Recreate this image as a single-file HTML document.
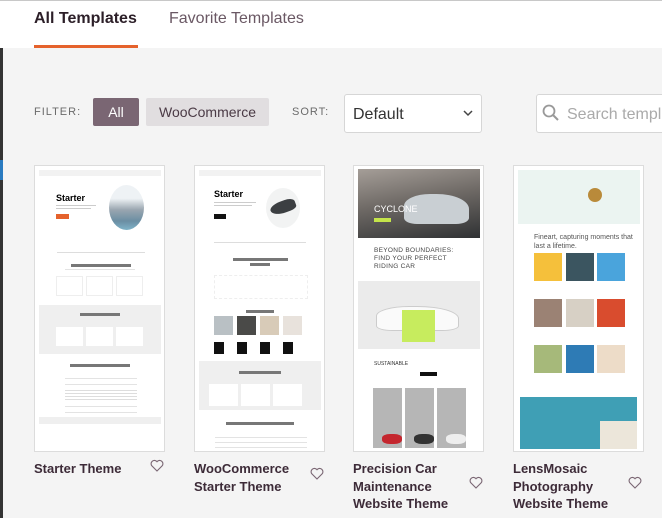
<!DOCTYPE html>
<html><head><meta charset="utf-8"><style>
*{margin:0;padding:0;box-sizing:border-box}
body{width:662px;height:518px;overflow:hidden;background:#f4f4f4;font-family:"Liberation Sans",sans-serif;position:relative}
.a{position:absolute}
.top{left:0;top:0;width:662px;height:48px;background:#fff;border-top:1px solid #c8c8c8}
.tab{font-size:16px;top:10px}
.card{background:#fff;border:1px solid #dcdcdc;width:131px;height:287px;top:165px;overflow:hidden}
.t{font-size:13px;font-weight:bold;color:#3d2b38;line-height:17.5px;top:460px}
.ln{background:#e3e3e3;height:1px}
.g{background:#efefef}
</style></head><body>
<div class="a top"></div>
<div class="a" style="left:0;top:48px;width:3px;height:470px;background:#333"></div>
<div class="a" style="left:0;top:160px;width:3px;height:20px;background:#2a7bc0"></div>
<div class="a tab" style="left:34px;font-weight:bold;color:#2c1f28;">All Templates</div>
<div class="a tab" style="left:169px;color:#6a5864;">Favorite Templates</div>
<div class="a" style="left:34px;top:45px;width:104px;height:3px;background:#e5622c"></div>

<div class="a" style="left:34px;top:106px;font-size:11px;letter-spacing:1px;color:#6b6b6b">FILTER:</div>
<div class="a" style="left:93px;top:98px;width:46px;height:28px;background:#7a6673;border-radius:2px;color:#fff;font-size:14px;text-align:center;line-height:28px">All</div>
<div class="a" style="left:146px;top:98px;width:123px;height:28px;background:#e1dee0;border-radius:2px;color:#4a3a45;font-size:14px;text-align:center;line-height:28px">WooCommerce</div>
<div class="a" style="left:292px;top:106px;font-size:11px;letter-spacing:1px;color:#6b6b6b">SORT:</div>
<div class="a" style="left:344px;top:94px;width:138px;height:39px;background:#fff;border:1px solid #d6d6d6;border-radius:3px;font-size:16px;color:#333;padding:11px 0 0 8px">Default</div>
<svg class="a" style="left:462px;top:108px" width="12" height="10"><path d="M2 3l4 4 4-4" stroke="#444" stroke-width="1.5" fill="none"/></svg>
<div class="a" style="left:536px;top:94px;width:140px;height:39px;background:#fff;border:1px solid #d6d6d6;border-radius:3px;font-size:16px;color:#aaa;padding:11px 0 0 30px;white-space:nowrap">Search templ</div>
<svg class="a" style="left:542px;top:104px" width="18" height="18"><circle cx="7" cy="7" r="5.5" stroke="#999" stroke-width="1.8" fill="none"/><path d="M11 11l5 5" stroke="#999" stroke-width="2"/></svg>

<!-- card 1 -->
<div class="a card" style="left:34px">
 <div class="a g" style="left:4px;top:4px;width:122px;height:6px;background:#f2f2f2"></div>
 <div class="a" style="left:21px;top:27px;font-size:9px;font-weight:bold">Starter</div>
 <div class="a ln" style="left:21px;top:39px;width:40px;background:#ccc"></div>
 <div class="a ln" style="left:21px;top:42px;width:35px;background:#ccc"></div>
 <div class="a" style="left:21px;top:48px;width:13px;height:5px;background:#e5622c"></div>
 <div class="a" style="left:74px;top:19px;width:35px;height:45px;border-radius:50%;background:linear-gradient(#eef2f5 30%,#9aa6b0 55%,#6b8ea3 80%,#7fb3c8)"></div>
 <div class="a ln" style="left:22px;top:86px;width:88px;background:#ddd"></div>
 <div class="a" style="left:36px;top:98px;width:60px;height:3px;background:#777"></div>
 <div class="a ln" style="left:30px;top:103px;width:70px"></div>
 <div class="a" style="left:21px;top:110px;width:27px;height:20px;border:1px solid #eee"></div>
 <div class="a" style="left:51px;top:110px;width:27px;height:20px;border:1px solid #eee"></div>
 <div class="a" style="left:81px;top:110px;width:27px;height:20px;border:1px solid #eee"></div>
 <div class="a g" style="left:4px;top:139px;width:122px;height:49px"></div>
 <div class="a" style="left:45px;top:147px;width:40px;height:3px;background:#777"></div>
 <div class="a" style="left:21px;top:161px;width:27px;height:19px;background:#fff"></div>
 <div class="a" style="left:51px;top:161px;width:27px;height:19px;background:#fff"></div>
 <div class="a" style="left:81px;top:161px;width:27px;height:19px;background:#fff"></div>
 <div class="a" style="left:35px;top:198px;width:60px;height:3px;background:#777"></div>
 <div class="a ln" style="left:30px;top:212px;width:72px"></div>
 <div class="a ln" style="left:30px;top:218px;width:72px"></div>
 <div class="a" style="left:30px;top:224px;width:72px;height:10px;background:repeating-linear-gradient(#ddd 0 1px,#fff 1px 3px)"></div>
 <div class="a ln" style="left:30px;top:240px;width:72px"></div>
 <div class="a ln" style="left:30px;top:246px;width:72px"></div>
 <div class="a g" style="left:4px;top:251px;width:122px;height:7px"></div>
</div>
<!-- card 2 -->
<div class="a card" style="left:194px">
 <div class="a g" style="left:4px;top:4px;width:122px;height:6px;background:#f2f2f2"></div>
 <div class="a" style="left:19px;top:23px;font-size:9px;font-weight:bold">Starter</div>
 <div class="a ln" style="left:19px;top:36px;width:42px;background:#ccc"></div>
 <div class="a ln" style="left:19px;top:39px;width:38px;background:#ccc"></div>
 <div class="a" style="left:19px;top:48px;width:12px;height:5px;background:#111"></div>
 <div class="a" style="left:71px;top:22px;width:34px;height:40px;border-radius:50%;background:#f2f3f3"></div>
 <div class="a" style="left:75px;top:35px;width:26px;height:12px;border-radius:50% 40% 30% 60%;background:#3c3f42;transform:rotate(-20deg)"></div>
 <div class="a ln" style="left:19px;top:76px;width:92px;background:#ddd"></div>
 <div class="a" style="left:38px;top:92px;width:55px;height:3px;background:#777"></div>
 <div class="a" style="left:55px;top:97px;width:20px;height:3px;background:#777"></div>
 <div class="a" style="left:19px;top:109px;width:94px;height:24px;border:1px dashed #eee"></div>
 <div class="a" style="left:51px;top:144px;width:28px;height:3px;background:#777"></div>
 <div class="a" style="left:19px;top:150px;width:19px;height:19px;background:#b9c0c4"></div>
 <div class="a" style="left:42px;top:150px;width:19px;height:19px;background:#4a4a48"></div>
 <div class="a" style="left:65px;top:150px;width:19px;height:19px;background:#d8cbb8"></div>
 <div class="a" style="left:88px;top:150px;width:19px;height:19px;background:#e8e2dc"></div>
 <div class="a" style="left:19px;top:176px;width:88px;height:12px;background:repeating-linear-gradient(90deg,#111 0 10px,#fff 10px 23px)"></div>
 <div class="a g" style="left:4px;top:195px;width:122px;height:49px"></div>
 <div class="a" style="left:44px;top:205px;width:42px;height:3px;background:#777"></div>
 <div class="a" style="left:14px;top:218px;width:29px;height:22px;background:#fff"></div>
 <div class="a" style="left:46px;top:218px;width:29px;height:22px;background:#fff"></div>
 <div class="a" style="left:78px;top:218px;width:29px;height:22px;background:#fff"></div>
 <div class="a" style="left:31px;top:256px;width:68px;height:3px;background:#777"></div>
 <div class="a ln" style="left:20px;top:271px;width:92px"></div>
 <div class="a ln" style="left:20px;top:276px;width:92px"></div>
 <div class="a ln" style="left:20px;top:281px;width:92px"></div>
</div>
<!-- card 3 -->
<div class="a card" style="left:353px">
 <div class="a" style="left:4px;top:3px;width:122px;height:69px;background:linear-gradient(170deg,#a59e98,#6f6a66 45%,#2f3133)"></div>
 <div class="a" style="left:50px;top:28px;width:65px;height:30px;border-radius:40% 50% 20% 20%;background:#c9cfd3"></div>
 <div class="a" style="left:20px;top:38px;font-size:9px;color:#fff">CYCLONE</div>
 <div class="a" style="left:20px;top:52px;width:17px;height:4px;background:#c4e44a"></div>
 <div class="a" style="left:20px;top:81px;font-size:6.5px;line-height:8px;color:#444;letter-spacing:.3px">BEYOND BOUNDARIES:<br>FIND YOUR PERFECT<br>RIDING CAR</div>
 <div class="a" style="left:4px;top:115px;width:122px;height:68px;background:#ebebeb"></div>
 <div class="a" style="left:22px;top:140px;width:83px;height:25px;border-radius:40% 50% 20% 20%;background:#fafafa;border:1px solid #ccc"></div>
 <div class="a" style="left:48px;top:144px;width:33px;height:32px;background:#c7ec5e"></div>
 <div class="a" style="left:20px;top:195px;font-size:5px;color:#333">SUSTAINABLE</div>
 <div class="a" style="left:66px;top:206px;width:17px;height:4px;background:#111"></div>
 <div class="a" style="left:19px;top:222px;width:29px;height:60px;background:#b6b6b6"></div>
 <div class="a" style="left:51px;top:222px;width:29px;height:60px;background:#b6b6b6"></div>
 <div class="a" style="left:83px;top:222px;width:29px;height:60px;background:#b6b6b6"></div>
 <div class="a" style="left:28px;top:268px;width:20px;height:10px;border-radius:40%;background:#c4262e"></div>
 <div class="a" style="left:60px;top:268px;width:20px;height:10px;border-radius:40%;background:#333"></div>
 <div class="a" style="left:92px;top:268px;width:20px;height:10px;border-radius:40%;background:#eee"></div>
</div>
<!-- card 4 -->
<div class="a card" style="left:513px">
 <div class="a" style="left:4px;top:4px;width:122px;height:54px;background:#ebf4f1"></div>
 <div class="a" style="left:74px;top:22px;width:14px;height:14px;border-radius:50%;background:#b98a3a"></div>
 <div class="a" style="left:20px;top:67px;font-size:7px;line-height:9px;color:#555">Fineart, capturing moments that<br>last a lifetime.</div>
 <div class="a" style="left:20px;top:87px;width:28px;height:28px;background:#f5c03b"></div>
 <div class="a" style="left:52px;top:87px;width:28px;height:28px;background:#3b5560"></div>
 <div class="a" style="left:83px;top:87px;width:28px;height:28px;background:#4aa4dc"></div>
 <div class="a" style="left:20px;top:133px;width:28px;height:28px;background:#9b8274"></div>
 <div class="a" style="left:52px;top:133px;width:28px;height:28px;background:#d7d0c5"></div>
 <div class="a" style="left:83px;top:133px;width:28px;height:28px;background:#d94c2e"></div>
 <div class="a" style="left:20px;top:179px;width:28px;height:28px;background:#a6b97a"></div>
 <div class="a" style="left:52px;top:179px;width:28px;height:28px;background:#2e7bb5"></div>
 <div class="a" style="left:83px;top:179px;width:28px;height:28px;background:#eddcc8"></div>
 <div class="a" style="left:6px;top:231px;width:117px;height:52px;background:#3f9fb5"></div>
 <div class="a" style="left:86px;top:255px;width:37px;height:28px;background:#ece6da"></div>
</div>

<div class="a t" style="left:34px">Starter Theme</div>
<div class="a t" style="left:194px">WooCommerce<br>Starter Theme</div>
<div class="a t" style="left:353px">Precision Car<br>Maintenance<br>Website Theme</div>
<div class="a t" style="left:513px">LensMosaic<br>Photography<br>Website Theme</div>
<svg class="a" style="left:150px;top:459px" width="14" height="13"><path d="M7 12L1.8 6.8A3 3 0 0 1 7 2.7A3 3 0 0 1 12.2 6.8Z" stroke="#7a6673" stroke-width="1.1" fill="none"/></svg>
<svg class="a" style="left:310px;top:467px" width="14" height="13"><path d="M7 12L1.8 6.8A3 3 0 0 1 7 2.7A3 3 0 0 1 12.2 6.8Z" stroke="#7a6673" stroke-width="1.1" fill="none"/></svg>
<svg class="a" style="left:469px;top:476px" width="14" height="13"><path d="M7 12L1.8 6.8A3 3 0 0 1 7 2.7A3 3 0 0 1 12.2 6.8Z" stroke="#7a6673" stroke-width="1.1" fill="none"/></svg>
<svg class="a" style="left:628px;top:476px" width="14" height="13"><path d="M7 12L1.8 6.8A3 3 0 0 1 7 2.7A3 3 0 0 1 12.2 6.8Z" stroke="#7a6673" stroke-width="1.1" fill="none"/></svg>
</body></html>
